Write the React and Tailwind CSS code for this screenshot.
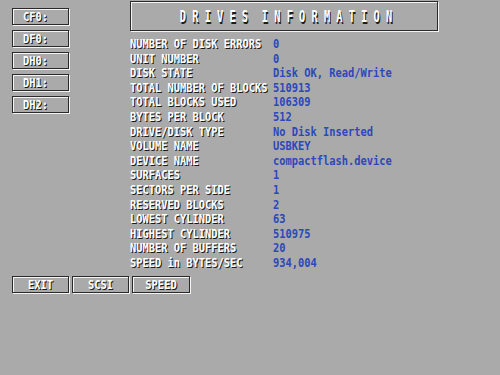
import React from 'react';

const rows = [
  ['NUMBER OF DISK ERRORS', '0'],
  ['UNIT NUMBER', '0'],
  ['DISK STATE', 'Disk OK, Read/Write'],
  ['TOTAL NUMBER OF BLOCKS', '510913'],
  ['TOTAL BLOCKS USED', '106309'],
  ['BYTES PER BLOCK', '512'],
  ['DRIVE/DISK TYPE', 'No Disk Inserted'],
  ['VOLUME NAME', 'USBKEY'],
  ['DEVICE NAME', 'compactflash.device'],
  ['SURFACES', '1'],
  ['SECTORS PER SIDE', '1'],
  ['RESERVED BLOCKS', '2'],
  ['LOWEST CYLINDER', '63'],
  ['HIGHEST CYLINDER', '510975'],
  ['NUMBER OF BUFFERS', '20'],
  ['SPEED in BYTES/SEC', '934,004'],
];

const drives = ['CF0:', 'DF0:', 'DH0:', 'DH1:', 'DH2:'];
const title = 'DRIVESINFORMATION'.split('');

// white topaz-ish text with the hard black drop shadow
const Label = ({ children, className = '' }) => (
  <span
    className={`inline-block origin-center scale-y-[1.2] whitespace-pre font-bold text-white [text-shadow:1px_1px_0_#1a1a1a] ${className}`}
  >
    {children}
  </span>
);

// etched amiga frame: dark line, white line offset one pixel down-right
const frame = 'border border-[#2a2a2a] shadow-[1px_1px_0_#f4f4f4,inset_1px_1px_0_#f4f4f4]';

const Gadget = ({ children, center, className = '' }) => (
  <div className={`flex h-[17px] items-center ${center ? 'justify-center' : 'pl-[10px]'} ${frame} ${className}`}>
    <Label>{children}</Label>
  </div>
);

export default function App() {
  return (
    <div
      className="h-[375px] w-[500px] overflow-hidden bg-[#aaaaaa] text-[10.4px] leading-none"
      style={{ fontFamily: '"DejaVu Sans Mono", "Liberation Mono", monospace' }}
    >
      <div className="flex h-[270px]">
        <div className="flex w-[130px] flex-col gap-[5px] pl-[12px] pt-[8px]">
          {drives.map((d) => (
            <Gadget key={d} className="w-[57px]">{d}</Gadget>
          ))}
        </div>

        <div className="flex flex-col pt-[1px]">
          <div className={`flex h-[30px] w-[308px] items-center justify-center pl-[4px] ${frame}`}>
            <div className="flex gap-[6.15px]">
              {title.map((c, i) => (
                <span
                  key={i}
                  className={`inline-block scale-y-[1.55] font-bold text-white [text-shadow:1px_1px_0_#1a1a1a] ${i === 6 ? 'ml-[7.6px]' : ''}`}
                >
                  {c}
                </span>
              ))}
            </div>
          </div>

          <div className="mt-[5px] flex flex-col">
            {rows.map(([k, v]) => (
              <div key={k} className="flex h-[14.6px] items-center">
                <div className="w-[143px]">
                  <Label>{k}</Label>
                </div>
                <span className="inline-block scale-y-[1.2] whitespace-pre font-bold text-[#2b48bc]">{v}</span>
              </div>
            ))}
          </div>
        </div>
      </div>

      <div className="mt-[6px] flex gap-[3px] pl-[12px]">
        <Gadget center className="w-[57px]">EXIT</Gadget>
        <Gadget center className="w-[57px]">SCSI</Gadget>
        <Gadget center className="w-[58px]">SPEED</Gadget>
      </div>
    </div>
  );
}
